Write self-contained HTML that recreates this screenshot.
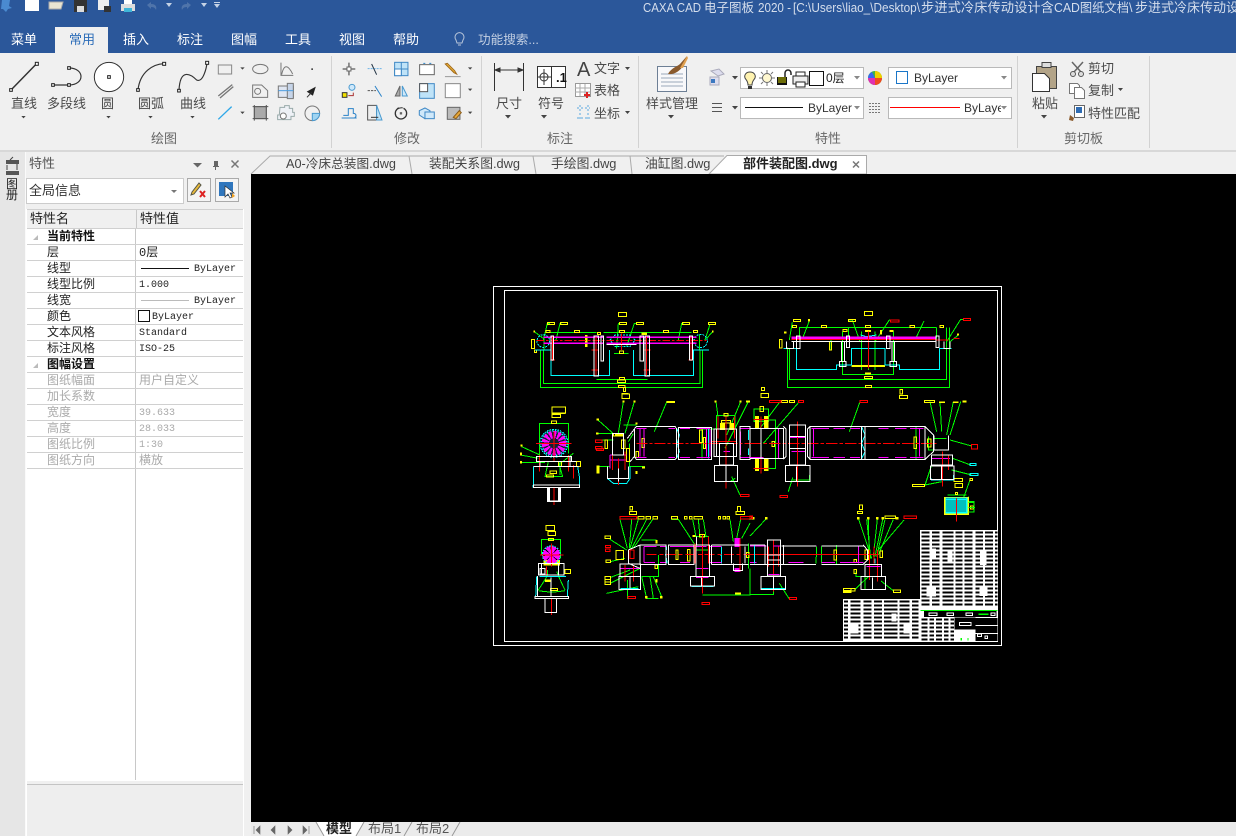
<!DOCTYPE html>
<html lang="zh"><head><meta charset="utf-8"><title>CAXA CAD 电子图板 2020</title>
<style>
html,body{margin:0;padding:0;width:1236px;height:836px;overflow:hidden;background:#f0f0f0}
svg{display:block}
text{font-family:"Liberation Sans","Noto Sans CJK SC",sans-serif;font-size:13px;fill:#444;white-space:pre}
.tab{fill:#fff}
.lb{fill:#4a4a4a}
.gp{fill:#666}
.t{fill:#d5deec;font-size:12.5px}
.s{font-family:"Liberation Mono","WenQuanYi Zen Hei","Noto Sans CJK SC",monospace;font-size:12px;fill:#222}
.d{fill:#aaa}
.b{font-weight:bold;fill:#111}
.m{font-family:"Liberation Mono",monospace;font-size:10px}
.ar{fill:#444;stroke:none}
</style></head><body>
<svg width="1236" height="836" viewBox="0 0 1236 836" xmlns="http://www.w3.org/2000/svg">
<defs><clipPath id="clipT"><rect x="0" y="0" width="1236" height="27"/></clipPath>
<clipPath id="c4"><rect x="888" y="97" width="113" height="21"/></clipPath></defs>
<!-- backgrounds -->
<rect width="1236" height="836" fill="#f0f0f0"/>
<rect width="1236" height="53" fill="#2b579a"/>
<rect x="55" y="27" width="53" height="27" fill="#f0f0f0"/>
<rect y="150" width="1236" height="2" fill="#d8d8d8"/>
<!-- title -->
<text x="643" y="12" class="t" textLength="58" lengthAdjust="spacingAndGlyphs">CAXA CAD</text>
<text x="704" y="12" class="t">电子图板</text>
<text x="758" y="12" class="t" textLength="33" lengthAdjust="spacingAndGlyphs">2020 -</text>
<text x="793" y="12" class="t" textLength="127" lengthAdjust="spacingAndGlyphs">[C:\Users\liao_\Desktop\</text>
<text x="921" y="12" class="t" style="font-size:13.300px">步进式冷床传动设计含</text>
<text x="1054" y="12" class="t" textLength="75" lengthAdjust="spacingAndGlyphs">CAD图纸文档</text>
<text x="1129" y="12" class="t">\</text>
<text x="1135" y="12" class="t" style="font-size:13px">步进式冷床传动设</text>
<!-- quick access -->
<g clip-path="url(#clipT)">
<path d="M2 0h8l-1 6 3 2-4 1-2 3-3-3H1z" fill="#4a8ad0"/>
<path d="M25 0h14v11H25z" fill="#fff"/>
<path d="M49 2h14l-2 7H49z" fill="#e8e4d2" stroke="#aaa"/>
<path d="M74 0h13v12H74z" fill="#333"/><rect x="77" y="6" width="7" height="6" fill="#ddd"/>
<path d="M98 0h11v10H98z" fill="#eee"/><rect x="104" y="6" width="7" height="6" fill="#333"/>
<path d="M121 4h14v7h-14z" fill="#ddd"/><rect x="124" y="0" width="8" height="4" fill="#fff"/><rect x="124" y="8" width="8" height="4" fill="#3fb6d8"/>
<path d="M147 5l4-3v2c5 0 6 3 5 6-1-2-2-3-5-3v2z" fill="#4f74aa"/>
<path d="M166 3h6l-3 4z" fill="#c5d2e5"/>
<path d="M191 5l-4-3v2c-5 0-6 3-5 6 1-2 2-3 5-3v2z" fill="#4f74aa"/>
<path d="M201 3h6l-3 4z" fill="#c5d2e5"/>
<path d="M214 2h6v1h-6zM214 4h6l-3 4z" fill="#c5d2e5"/>
</g>
<!-- tabs -->
<text x="11" y="44" class="tab">菜单</text>
<text x="69" y="44" style="fill:#2b6cb8">常用</text>
<text x="123" y="44" class="tab">插入</text>
<text x="177" y="44" class="tab">标注</text>
<text x="231" y="44" class="tab">图幅</text>
<text x="285" y="44" class="tab">工具</text>
<text x="339" y="44" class="tab">视图</text>
<text x="393" y="44" class="tab">帮助</text>
<path d="M456 40a4.5 4.5 0 1 1 7 0l-1 3h-5z" fill="none" stroke="#b8c6da"/><path d="M458 45h3" stroke="#b8c6da"/>
<text x="478" y="44" style="fill:#c3cfe2;font-size:12.6px">功能搜索...</text>
<!-- separators -->
<path d="M331.500 56V148M481.500 56V148M638.500 56V148M1017.500 56V148M1149.500 56V148" stroke="#d2d2d2"/>
<!-- draw group -->
<g transform="scale(.3333)" fill="none" stroke="#333" stroke-width="3.500">
<path d="M33 270L110 191" stroke-width="4.500"/>
<path d="M160 255H207M207 204C255 204 255 255 207 255"/>
<circle cx="327" cy="231" r="44" fill="#fff" stroke-width="3"/>
<path d="M414 270C420 215 460 192 492 191"/>
<path d="M537 272C540 200 575 225 590 240C610 250 620 200 621 188"/>
<g fill="#fff" stroke="#222" stroke-width="3">
<rect x="29" y="266" width="8" height="8"/><rect x="106" y="187" width="9" height="9"/>
<rect x="155" y="251" width="8" height="8"/><rect x="203" y="251" width="8" height="8"/><rect x="203" y="200" width="8" height="8"/>
<rect x="323" y="227" width="8" height="8"/>
<rect x="410" y="266" width="8" height="8"/><rect x="488" y="187" width="9" height="9"/>
<rect x="533" y="268" width="8" height="8"/><rect x="617" y="184" width="9" height="9"/>
</g>
<!-- small draw icons -->
<g stroke="#777" stroke-width="3">
<path d="M655 195H695V222H655Z" stroke="#888"/>
<ellipse cx="781" cy="207" rx="23" ry="14"/>
<path d="M843 188V226H880M845 224C852 190 865 195 878 222"/>
<path d="M655 288L697 254M660 294L700 260" stroke-width="4"/>
<path d="M758 255H785L803 272V292H758Z"/><circle cx="773" cy="274" r="9"/>
<path d="M835 258H880V292H835Z" fill="#dfe6f2"/><path d="M862 250H880V296H862Z" fill="#c6d4e8"/><path d="M835 272H880" stroke="#4c9de0"/>
<path d="M655 358L695 320" stroke="#2ea7e8" stroke-width="4"/>
<rect x="763" y="320" width="36" height="36" fill="#aaa"/><path d="M758 320H805M758 356H805M763 315V362M799 315V362" stroke="#555"/>
<path d="M840 322h14v-5h14v8h10v12h5v12h-10v10h-40v-14h5z" fill="#eef1f6" stroke="#9aa"/><circle cx="850" cy="348" r="9" fill="#fff"/>
<circle cx="937" cy="340" r="22"/><path d="M937 340h22a22 22 0 0 1-22 22z" fill="#9fd4f2" stroke="#4a9ad0"/>
<path d="M923 275L945 263L938 285Z" fill="#222" stroke="#222"/><path d="M921 292L936 276" stroke="#333"/>
</g>
<rect x="934" y="205" width="5" height="5" fill="#444" stroke="none"/>
<!-- modify icons -->
<g stroke="#666" stroke-width="3">
<path d="M1028 207H1040M1054 207H1066M1047 188V200M1047 214V226" stroke="#333"/><rect x="1041" y="201" width="12" height="12" fill="#fff"/>
<path d="M1103 206H1148" stroke="#6bb3e6" stroke-dasharray="6 3"/><path d="M1115 192L1130 224" stroke="#234"/>
<rect x="1184" y="187" width="40" height="40" fill="#bfe3f8" stroke="#3f88c5"/><path d="M1204 187V227M1184 207H1224" stroke="#3f88c5"/><rect x="1184" y="207" width="20" height="20" fill="#fff" stroke="#3f88c5"/>
<rect x="1259" y="194" width="44" height="30" fill="#fff" stroke="#666"/><path d="M1270 190h6M1288 190h6" stroke="#2a82c8"/>
<path d="M1336 192L1362 218L1370 222L1364 212L1342 190Z" fill="#f0b93a" stroke="#a26a1c"/><path d="M1335 230H1382" stroke="#999"/>
<rect x="1027" y="278" width="14" height="14" fill="#f3e100" stroke="#333"/><circle cx="1056" cy="262" r="9" fill="#cfe8fa" stroke="#4a9ad0"/><path d="M1045 287H1060V278" stroke="#a33"/>
<path d="M1103 272H1128" stroke="#555" stroke-dasharray="7 3"/><path d="M1125 258L1145 290" stroke="#2a82c8"/>
<path d="M1186 288L1200 258V288Z" fill="#aaa"/><path d="M1207 258L1222 288H1207Z" fill="#cfe8fa" stroke="#4a9ad0"/>
<rect x="1259" y="251" width="44" height="44" fill="#bfe3f8" stroke="#3f88c5"/><rect x="1259" y="251" width="24" height="24" fill="#fff" stroke="#555"/>
<rect x="1336" y="251" width="45" height="42" fill="#fff" stroke="#888"/>
<path d="M1025 354H1070M1030 346H1045V326H1060V340C1070 340 1070 350 1064 354" stroke="#2a82c8"/>
<path d="M1103 316H1130V360H1103Z" fill="#eee" stroke="#555"/><path d="M1130 316L1146 360H1130Z" fill="#bfe3f8" stroke="#4a9ad0"/><path d="M1113 352H1135" stroke="#333"/>
<circle cx="1203" cy="340" r="17" stroke="#333" stroke-width="4"/><rect x="1201" y="338" width="4" height="4" fill="#333"/><rect x="1197" y="318" width="14" height="8" fill="#f0f0f0" stroke="none"/><path d="M1192 325L1208 323" stroke="#333"/>
<path d="M1258 332L1275 324L1290 332V352L1275 356L1258 345Z" fill="#cfe8fa" stroke="#3f88c5"/><rect x="1275" y="336" width="28" height="20" fill="#cfe8fa" stroke="#3f88c5"/>
<rect x="1342" y="322" width="38" height="36" fill="#bbb" stroke="#666"/><path d="M1360 352L1378 332L1384 338L1368 356Z" fill="#e8a93a" stroke="#8a5b1a"/>
</g>
<g class="ar" fill="#444" stroke="none">
<path d="M64 348h13l-6.500 7zM319 348h13l-6.500 7zM445 348h13l-6.500 7zM571 348h13l-6.500 7zM721 202h13l-6.500 7zM721 335h13l-6.500 7zM1404 202h13l-6.500 7zM1404 266h13l-6.500 7zM1404 335h13l-6.500 7z"/>
</g>
</g>
<g class="lb">
<text x="11" y="108" class="lb">直线</text><text x="47" y="108" class="lb">多段线</text><text x="101" y="108" class="lb">圆</text><text x="138" y="108" class="lb">圆弧</text><text x="180" y="108" class="lb">曲线</text>
<text x="151" y="143" class="gp">绘图</text><text x="394" y="143" class="gp">修改</text>
<text x="496" y="108" class="lb">尺寸</text><text x="538" y="108" class="lb">符号</text>
<text x="594" y="73" class="lb">文字</text><text x="594" y="95" class="lb">表格</text><text x="594" y="118" class="lb">坐标</text>
<text x="547" y="143" class="gp">标注</text>
<text x="646" y="108" class="lb">样式管理</text><text x="815" y="143" class="gp">特性</text>
<text x="1032" y="108" class="lb">粘贴</text><text x="1088" y="73" class="lb">剪切</text><text x="1088" y="95" class="lb">复制</text><text x="1088" y="118" class="lb">特性匹配</text>
<text x="1064" y="143" class="gp">剪切板</text>
</g>
<!-- annotation icons -->
<g fill="none" stroke="#333">
<path d="M494.500 63V91M523.500 63V91M495 70H523"/><path d="M495 70l5-2v4zM523 70l-5-2v4z" fill="#333"/>
<rect x="537.500" y="66.500" width="28" height="21" fill="#fff"/><path d="M551.500 66V88"/><circle cx="544" cy="77" r="4"/><path d="M538 77H551M544 69V85"/>
<rect x="575.500" y="83.500" width="15" height="13" fill="#fff" stroke="#999"/><path d="M575 88H590M575 92H590M580 84V96M585 84V96" stroke="#aaa"/><path d="M584 95h6M587 92v6" stroke="#d22" stroke-width="2"/>
<path d="M577 108H590M577 118H590M580 105V121M588 105V121" stroke="#5aa7e0" stroke-dasharray="2 2"/>
</g>
<text x="556" y="82" style="font-size:13px;font-weight:bold;fill:#111">.1</text>
<text x="577" y="76" style="font-size:20px;fill:#444">A</text>
<g class="ar"><path d="M505 115h6l-3 3.500zM541 115h6l-3 3.500zM625 67h5l-2.500 3zM625 111h5l-2.500 3zM668 115h6l-3 3.500zM732 76h6l-3 3.500zM732 106h6l-3 3.500zM1041 115h6l-3 3.500zM1118 88h5l-2.500 3z"/></g>
<!-- style mgr -->
<rect x="657.500" y="66.500" width="29" height="25" fill="#f8f8fa" stroke="#6d7f95"/>
<path d="M661 74h22M661 78h22M661 82h22M661 86h22" stroke="#9aa9ba"/>
<path d="M668 74c3-6 10-8 12-10l7-8-4 10c-3 5-9 9-15 8z" fill="#8a5a2c"/>
<path d="M680 68l7-12 1 2-5 10z" fill="#e0a050"/>
<!-- prop icons -->
<path d="M711 71l8-2 5 5-6 2zM710 77h9v8h-9z" fill="#dde" stroke="#aab"/><rect x="711" y="79" width="4" height="4" fill="#3b78c0"/>
<path d="M712 103.500h10M712 107.500h10M712 111.500h10" stroke="#555"/>
<g fill="#fff" stroke="#b9b9b9">
<rect x="740.500" y="67.500" width="123" height="21"/><rect x="888.500" y="67.500" width="123" height="21"/>
<rect x="740.500" y="97.500" width="123" height="21"/><rect x="888.500" y="97.500" width="123" height="21"/>
</g>
<path d="M750 72c-4 0-6 3-5 6 1 2 3 3 3 7h4c0-4 2-5 3-7 1-3-1-6-5-6z" fill="#fff3b0" stroke="#444"/><path d="M748 86h4v3h-4z" fill="#333"/>
<circle cx="767" cy="78" r="4.500" fill="#fff8d0" stroke="#666"/><path d="M767 70v3M767 83v3M759 78h3M772 78h3M761 72l2 2M771 82l2 2M773 72l-2 2M763 82l-2 2" stroke="#777"/>
<rect x="777" y="77" width="10" height="8" fill="#111"/><path d="M778 78h8M778 80h8M778 82h8" stroke="#cc0"/><path d="M785 77v-4a3 3 0 0 1 6 0v2" fill="none" stroke="#222" stroke-width="1.500"/>
<path d="M793 76h15v8h-15z" fill="#eee" stroke="#222"/><rect x="796" y="72" width="9" height="4" fill="#fff" stroke="#222"/><rect x="796" y="82" width="9" height="5" fill="#fff" stroke="#222"/>
<rect x="809.500" y="71.500" width="14" height="14" fill="#fff" stroke="#111"/>
<text x="826" y="82" style="font-size:12px;fill:#222">0层</text>
<path d="M854 76h6l-3 3.500zM1001 76h6l-3 3.500zM854 106h6l-3 3.500zM1001 106h6l-3 3.500z" fill="#888"/>
<circle cx="875" cy="78" r="7" fill="#3fb24a"/><path d="M875 78V71A7 7 0 0 1 882 78Z" fill="#f0d000"/><path d="M875 78H882A7 7 0 0 1 875 85Z" fill="#f04a20"/><path d="M875 78V85A7 7 0 0 1 868 78Z" fill="#e030b0"/><path d="M875 78H868A7 7 0 0 1 872 72Z" fill="#3a66f0"/>
<rect x="896.500" y="71.500" width="11" height="12" fill="#fff" stroke="#1a76c8"/>
<text x="914" y="82" style="font-size:12px;fill:#333">ByLayer</text>
<path d="M745 107.500H803" stroke="#111"/>
<text x="808" y="112" style="font-size:12px;fill:#333">ByLayer</text>
<path d="M869 103.500h12M869 106.500h12M869 109.500h12M869 112.500h12" stroke="#777" stroke-dasharray="2 1"/>
<rect x="890" y="107" width="70" height="1" style="fill:#ff0000"/>
<g clip-path="url(#c4)"><text x="964" y="112" style="font-size:12px;fill:#333">ByLayer</text></g>
<!-- clipboard icons -->
<rect x="1036.500" y="66.500" width="20" height="22" fill="#b3a488" stroke="#444"/><rect x="1042" y="62.500" width="9" height="5" fill="#ddd" stroke="#444"/>
<path d="M1032.500 73.500h12l5 5V91.500h-17z" fill="#fff" stroke="#333"/>
<path d="M1072 62l9 10M1083 62l-9 10" stroke="#666" stroke-width="1.500"/><circle cx="1073" cy="74" r="2.500" fill="#ddd" stroke="#555"/><circle cx="1081" cy="74" r="2.500" fill="#ddd" stroke="#555"/>
<path d="M1069.500 83.500h8l2 2v8h-10z" fill="#fff" stroke="#777"/><path d="M1074.500 87.500h7l3 3v8h-10z" fill="#fff" stroke="#777"/>
<rect x="1074.500" y="105.500" width="10" height="12" fill="#fff" stroke="#666"/><rect x="1076" y="107" width="6" height="6" fill="#2f6cb3"/><path d="M1070 115l4 3-1 3-4-1z" fill="#8a5a2c"/>
<!-- left strip -->
<rect x="0" y="152" width="25" height="684" fill="#e6e6e6"/>
<rect x="25" y="152" width="1" height="684" fill="#fafafa"/>
<path d="M6 160h13v4H6zM6 171h13v4H6z" fill="#555"/><path d="M7 170v-5M17 170v-6M10 160l3-3" stroke="#444"/>
<text x="6" y="188" class="s" style="font-size:12px">图</text><text x="6" y="199" class="s" style="font-size:12px">册</text>
<!-- prop panel -->
<text x="29" y="168" style="font-size:13px;fill:#555">特性</text>
<path d="M193 163h9l-4.500 4.500z" fill="#666"/>
<path d="M214 161h4v5h1v1h-3v3h-1v-3h-2v-1h1z" fill="#666"/>
<path d="M231.500 160.500l7 7M238.500 160.500l-7 7" stroke="#777" stroke-width="1.500"/>
<rect x="26.500" y="178.500" width="157" height="25" fill="#fff" stroke="#ccc"/>
<text x="29" y="195" style="font-size:13px;fill:#333">全局信息</text>
<path d="M171 190h6l-3 3z" fill="#777"/>
<rect x="187.500" y="178.500" width="23" height="23" fill="#f4f4f4" stroke="#aaa"/>
<path d="M192 192l7-9 2 2-7 9-3 1z" fill="#e8b93a" stroke="#554"/><path d="M200 191l5 6M205 191l-5 6" stroke="#d22" stroke-width="2"/>
<rect x="215.500" y="178.500" width="23" height="23" fill="#f4f4f4" stroke="#aaa"/>
<rect x="219" y="182" width="14" height="14" fill="#2f76bd"/><path d="M225 186v11l3-3 2 4 2-1-2-4h4z" fill="#fff" stroke="#333" stroke-width=".7"/><path d="M232 193l3 3-3 2" fill="#f2a01f"/>
<rect x="26" y="209" width="218" height="572" fill="#fff"/>
<rect x="26" y="209" width="218" height="19" fill="#f0f0f0"/>
<path d="M26.500 209V836M243.500 209V836" stroke="#fff"/>
<path d="M136.500 209V228M135.500 228V780" stroke="#c8c8c8"/>
<path d="M27 209.500H243M27 228.500H243M27 244.500H243M27 260.500H243M27 276.500H243M27 292.500H243M27 308.500H243M27 324.500H243M27 340.500H243M27 356.500H243M27 372.500H243M27 388.500H243M27 404.500H243M27 420.500H243M27 436.500H243M27 452.500H243M27 468.500H243" stroke="#d0d0d0"/>
<path d="M27 784.500H243" stroke="#c4c4c4"/>
<rect x="27" y="785" width="216" height="51" fill="#eee"/>
<path d="M33 240l5-5v5zM33 368l5-5v5z" fill="#bbb"/>
<text x="30" y="223" class="s" style="font-size:13px">特性名</text><text x="140" y="223" class="s" style="font-size:13px">特性值</text>
<text x="47" y="240" class="s b">当前特性</text>
<text x="47" y="256" class="s">层</text><text x="47" y="272" class="s">线型</text><text x="47" y="288" class="s">线型比例</text><text x="47" y="304" class="s">线宽</text><text x="47" y="320" class="s">颜色</text><text x="47" y="336" class="s">文本风格</text><text x="47" y="352" class="s">标注风格</text>
<text x="47" y="368" class="s b">图幅设置</text>
<text x="47" y="384" class="s d">图纸幅面</text><text x="47" y="400" class="s d">加长系数</text><text x="47" y="416" class="s d">宽度</text><text x="47" y="432" class="s d">高度</text><text x="47" y="448" class="s d">图纸比例</text><text x="47" y="464" class="s d">图纸方向</text>
<text x="139" y="256" class="s">0层</text>
<path d="M141 268.500H189" stroke="#111"/><text x="194" y="271" class="s m">ByLayer</text>
<text x="139" y="287" class="s m">1.000</text>
<path d="M141 300.500H189" stroke="#bbb"/><text x="194" y="303" class="s m">ByLayer</text>
<rect x="138.500" y="310.500" width="11" height="11" fill="#fff" stroke="#111"/><text x="152" y="319" class="s m">ByLayer</text>
<text x="139" y="335" class="s m">Standard</text>
<text x="139" y="351" class="s m">ISO-25</text>
<text x="139" y="384" class="s d">用户自定义</text>
<text x="139" y="415" class="s m d">39.633</text><text x="139" y="431" class="s m d">28.033</text><text x="139" y="447" class="s m d">1:30</text>
<text x="139" y="464" class="s d">横放</text>
<!-- doc tabs -->
<rect x="251" y="155" width="985" height="19" fill="#f0f0f0"/>
<path d="M251 174L270 156H409L412 174M409 156H533L536 174M533 156H630L632 174M630 156H724" fill="none" stroke="#aaa"/>
<path d="M709 174L727 155.500H866.500V174Z" fill="#fff" stroke="#aaa"/>
<text x="286" y="168" style="font-size:12.700px">A0-冷床总装图.dwg</text>
<text x="429" y="168" style="font-size:12.800px">装配关系图.dwg</text>
<text x="551" y="168" style="font-size:12.800px">手绘图.dwg</text>
<text x="645" y="168" style="font-size:12.800px">油缸图.dwg</text>
<text x="743" y="168" style="font-size:13px;font-weight:bold;fill:#222">部件装配图.dwg</text>
<path d="M853 161.500l6 6M859 161.500l-6 6" stroke="#777" stroke-width="1.500"/>
<!-- canvas -->
<rect x="251" y="174" width="985" height="648" fill="#000"/>
<!-- bottom tabs -->
<rect x="251" y="822" width="985" height="14" fill="#ebebeb"/>
<path d="M254 826v8M260 826l-4 4 4 4zM275 826l-4 4 4 4zM288 826l4 4-4 4zM303 826l4 4-4 4zM309 826v8" fill="#666" stroke="#666" stroke-width=".6"/>
<path d="M316 822L324 836H356L364 822Z" fill="#fff"/>
<path d="M316 822L324 836M364 822L356 836M412 822L404 836M460 822L452 836" stroke="#999" fill="none"/>
<text x="326" y="833" style="font-size:13px;font-weight:bold;fill:#222">模型</text>
<text x="368" y="833" style="font-size:13px;fill:#555">布局1</text>
<text x="416" y="833" style="font-size:13px;fill:#555">布局2</text>
<!-- DRAWING -->
<g fill="none" stroke-width="1" shape-rendering="crispEdges">
<rect x="493.500" y="286.500" width="508" height="359" stroke="#fff"/>
<rect x="504.500" y="290.500" width="493" height="351" stroke="#fff"/>
</g>
<g transform="translate(490 285) scale(.33333)" fill="none" stroke-width="3" shape-rendering="crispEdges">
<g stroke="#0f0">
<path d="M152 195V307H638V195M160 195V296H630V195M165 143H320M340 143H605M320 284H472M133 140L160 160M180 115H172L160 165M215 115H210L198 165M390 115H385L380 190M440 115H433L410 185M580 115H575L565 165M660 118L645 165M668 140L650 160M372 205H415M162 148V195M628 148V195"/>
<path d="M323 404L370 446M400 350L385 445M433 350L405 445M535 351H530L493 440M678 350L684 395M752 350L710 450M775 350L705 490M400 420H440M322 445H370M322 465H370M322 545H360M430 445L415 470M418 475V545H465"/>
<path d="M148 510V415H236V505M95 485L150 510M92 510L145 520M92 533H165M175 530L165 575H218L205 530M210 530V570M250 505L205 540M255 530H205"/>
<path d="M680 392H735V432H680ZM680 432V400M636 432H670M636 432V520M725 575L750 630M678 590H720L735 580"/>
</g>
<g stroke="#ff0">
<path d="M172 112h22v7h-22zM211 112h22v7h-22zM388 112h22v7h-22zM439 112h22v7h-22zM577 112h22v7h-22zM655 112h22v7h-22zM385 82h25v13h-25zM168 136h12v6h-12zM253 136h16v6h-16zM388 136h16v6h-16zM520 136h16v6h-16zM610 136h12v6h-12zM322 143h10v6h-10zM125 163h8v28h-8zM133 195h6v8h-6zM388 198h12v7h-12zM382 285h25v8h-25zM388 277h16v7h-16zM385 301h20v7h-20zM400 307h7v13h-7zM396 327h23v14h-23zM395 325h20"/>
<path d="M186 366h41v18h-41zM186 388h26v10h-26zM184 408h16v7h-16zM180 558h20v8h-20zM170 570h20v6h-20zM260 530h12v14h-12zM205 530h10v14h-10zM185 386h42"/>
<path d="M456 460h8v28h-8zM438 500h8v18h-8zM628 435h10v38h-10zM640 458h6v32h-6zM694 406h28v8h-28zM702 385h12v8h-12zM370 445h30v8h-30zM395 465h10v25h-10zM410 490h8v40h-8zM345 465h8v25h-8z"/>
<path d="M720 415h12v18h-12zM692 415h12v18h-12z" fill="#ff0"/>
</g>
<g fill="#ff0" stroke="none">
<rect x="530" y="348" width="25" height="6"/><rect x="130" y="136" width="5" height="7"/><rect x="666" y="136" width="5" height="7"/><rect x="455" y="143" width="16" height="7"/><rect x="285" y="150" width="8" height="36"/>
<rect x="320" y="400" width="7" height="7"/><rect x="397" y="346" width="7" height="7"/><rect x="430" y="346" width="7" height="7"/><rect x="673" y="346" width="7" height="7"/><rect x="748" y="346" width="7" height="7"/><rect x="768" y="346" width="12" height="7"/>
<rect x="318" y="442" width="8" height="6"/><rect x="320" y="542" width="8" height="24"/><rect x="92" y="478" width="6" height="6"/><rect x="90" y="502" width="6" height="9"/><rect x="90" y="528" width="6" height="7"/><rect x="436" y="558" width="6" height="9"/><rect x="456" y="544" width="9" height="7"/><rect x="436" y="412" width="7" height="6"/><rect x="375" y="445" width="25" height="8"/>
</g>
<g stroke="#0ff">
<path d="M135 195H183V271H358V195M430 195V271H611V195H657"/>
<circle cx="160" cy="168" r="19" stroke-dasharray="6 3"/><circle cx="632" cy="168" r="20" stroke-dasharray="6 3"/><path d="M360 165L375 150H418L435 165L420 185H375Z" stroke-dasharray="6 3"/>
<path d="M130 545V600L128 607M263 545L268 575V607M352 545V580L370 595H410L420 580V545"/>
<path d="M560 430L568 450L562 475L568 500L560 520M655 430V520M775 435V465M775 490V510"/>
</g>
<circle cx="192" cy="475" r="42" fill="#123" stroke="#0ff" stroke-dasharray="5 3"/>
<circle cx="192" cy="475" r="37" stroke="#0ff" stroke-width="6" stroke-dasharray="3 5"/>
<circle cx="192" cy="475" r="26" stroke="#f0f" stroke-width="22" stroke-dasharray="8 4"/>
<g stroke="#f0f">
<path d="M160 157H340M160 175H340M430 157H620M430 175H620M350 157H440M350 175H440" stroke-width="4"/>
<path d="M440 430H470M535 430H555M570 430H600M620 430H660M440 518H470M535 518H555M570 518H600M620 518H660M752 430H780M752 518H780"/>
<path d="M450 432V515M462 432V515M650 432V515M660 432V515M752 440V510M360 510H410M360 525H410M360 510V550M720 500H700"/>
</g>
<g stroke="#f00">
<path d="M140 167H650" stroke-dasharray="22 6 8 6"/>
<path d="M440 475H780" stroke-dasharray="32 6 10 6"/>
<path d="M138 475H245M192 440V530M192 608V660M148 510V560M236 510V560M250 540V580"/>
<path d="M368 445V555M385 520V600M405 500V555M708 395V610M665 470H740M684 395V460M734 395V460"/>
<path d="M316 465h20v7h-20zM316 484h20v8h-20zM320 490h20v7h-20zM752 628h25v7h-25zM180 225h15M595 225h15M305 195h22M460 195h22M305 255h22M460 255h22"/>
<path d="M395 145V195M187 153V228M318 153V275M470 153V272M603 153V228"/>
</g>
<g stroke="#fff">
<path d="M183 153h7v72h-7zM312 153h13v120h-13zM333 153h8v75h-8zM450 153h10v75h-10zM465 153h13v120h-13zM598 153h10v72h-10zM350 178H440"/>
<path d="M440 424H555L560 432V518L555 524H440L433 515V432ZM433 432L412 460M433 515L420 530M565 428H665V524H565ZM672 432H740V515H672ZM680 432V515M740 432V515M750 424H780V524H750ZM688 475H730V540H688ZM673 541H743V590H673ZM708 541V590M686 590H730"/>
<path d="M140 515H245V530H140ZM163 530H260M130 545H265M130 600H268V607H130ZM175 608V650H210V608M178 648H208M150 530V545M240 515V545"/>
<path d="M352 545V580H415V545M385 550V590M368 445H400V510H368Z"/>
<path d="M172 608h6v42h-6zM205 608h6v42h-6z" fill="#fff"/>
</g>
</g>
<g transform="translate(750 285) scale(.33333)" fill="none" stroke-width="3" shape-rendering="crispEdges">
<g stroke="#0f0">
<path d="M148 160V127H295V160M560 127H295M560 127V160M127 112L118 165M177 110L157 162M297 105H307L330 170M425 105H418L375 170M522 108L495 165M640 103H632L590 170M118 190V284H590V127M112 188V307H598V127M278 140V268H430V140M335 140V255M375 140V255M355 140V255M243 155V195M625 150L600 170"/>
<path d="M12 372H55V410H12ZM12 405H76V550H55M76 405V500M148 350L40 475M90 350L30 430M498 425V525M540 350L560 440M570 350L575 440M610 350L590 450M632 350L600 450M600 465L665 483M608 520L662 540M605 555L665 570M575 590L525 600M545 540L525 600M640 640L660 585M115 620L128 578M125 585H178V570M330 350L298 440"/>
<path d="M592 630H650M650 650H674M655 635V660M535 455V495H552M554 460H590"/>
</g>
<g stroke="#ff0">
<path d="M130 103h22v7h-22zM295 103h22v7h-22zM343 79h25v13h-25zM214 121h16v7h-16zM346 121h16v7h-16zM480 121h14v7h-14zM570 121h11v7h-11zM127 121h12v7h-12zM279 133h12v7h-12zM88 163h8v26h-8zM238 170h6v25h-6zM343 274h25v7h-25zM346 301h18v6h-18zM450 313h8v14h-8zM448 331h25v10h-25zM33 325h23v13h-23zM34 307h10v10h-10zM118 346h16v6h-16zM524 346h30v6h-30zM492 456h7v35h-7zM533 462h10v24h-10zM612 580h25v10h-25zM615 595h23v13h-23zM488 598h36v7h-36zM617 622h6v6h-6zM660 580h8v6h-8zM66 470h8v15h-8zM30 365h10v15h-10zM95 346h18v6h-18z"/>
<path d="M16 395h10v35h-10zM44 395h10v35h-10zM16 520h10v36h-10zM44 520h10v36h-10z" fill="#ff0"/>
</g>
<g fill="#ff0" stroke="none">
<rect x="174" y="102" width="6" height="8"/><rect x="345" y="135" width="18" height="6"/><rect x="390" y="135" width="6" height="14"/><rect x="418" y="135" width="12" height="6"/><rect x="305" y="240" width="100" height="6"/><rect x="345" y="262" width="18" height="6"/><rect x="621" y="145" width="6" height="6"/><rect x="102" y="139" width="8" height="7"/><rect x="567" y="349" width="18" height="5"/><rect x="609" y="349" width="16" height="5"/><rect x="638" y="346" width="12" height="7"/>
<rect x="582" y="636" width="75" height="24"/>
</g>
<rect x="586" y="638" width="66" height="22" fill="#0ff" stroke="none"/>
<path d="M590 640h60M590 646h60M590 652h60M590 658h60" stroke="#000" stroke-dasharray="3 3" stroke-width="2"/>
<g stroke="#0ff">
<path d="M100 190H139V253H260V240H305V190H405V240H448V253H568V190H605"/>
<path d="M335 425L345 450L335 475L345 500L335 520M332 150L350 155L380 150M540 575L545 585H610V570"/>
</g>
<rect x="125" y="155" width="435" height="7" fill="#f0f" stroke="none"/>
<g stroke="#f0f" stroke-width="3">
<path d="M185 430H237M250 430H285M300 430H330M385 430H415M435 430H470M480 430H520M185 518H237M250 518H285M300 518H330M385 518H415M435 518H470M480 518H520M120 458H165M120 490H165M125 500H165M0 430H40M0 518H40M85 430V520M190 432V515M508 432V515M545 520H600"/>
</g>
<g stroke="#f00">
<path d="M125 164H560" stroke-width="3"/><path d="M0 475H560" stroke-dasharray="35 6 10 6"/>
<path d="M422 105h25v6h-25zM640 100h22v6h-22zM330 346h22v6h-22zM145 346h16v6h-16zM58 346h35v6h-35zM664 478h18v14h-18zM90 631h22v7h-22z"/>
<path d="M142 410V605M33 395V565M355 140V250M578 500V605M596 510V555M10 550H55M10 403H55M610 160H628M620 640V660M595 165H560"/>
</g>
<g stroke="#fff">
<path d="M180 424H525V523H180ZM180 424L173 432V515L180 523M525 424L550 450V500L525 523M335 424V523M345 424V523M100 424L108 432V515L100 523M118 420H167V540H118ZM118 455H167M118 490H167M106 541H180V590H106ZM140 545V590M0 430H100V520H0M0 430M33 430V520"/>
<path d="M125 169H560M140 153h10v38h-10zM290 153h9v35h-9zM410 153h10v38h-10zM558 153h9v35h-9zM275 170h9v60h-9zM426 170h8v60h-8zM110 170V190H130V170M582 170V190H600V170M268 230h20v15h-20zM420 230h20v15h-20z"/>
<path d="M552 452V495H595V452M544 510H608V540H544ZM541 543H612V584H541ZM575 543V584"/>
</g>
<g stroke="#0ff"><path d="M660 535h18v7h-18zM660 565h24v7h-24z"/></g>
</g>
<g transform="translate(490 500) scale(.33333)" fill="none" stroke-width="3" shape-rendering="crispEdges">
<g stroke="#0f0">
<path d="M390 58L412 145M425 58L418 145M445 58L420 145M470 58L425 145M488 58L430 145M545 58H565L615 135M608 58L618 110M625 58L630 110M640 58L648 110M720 58L730 125M752 58L740 115M780 70L755 115"/>
<path d="M155 165V118H212V175M145 270C170 230 175 230 172 210M225 270C205 230 205 225 200 215M145 272Q185 280 225 272M360 118L410 150M360 185L405 175M362 232L420 210M360 250L450 205M350 280L445 260M455 230L470 295H505M480 230L490 295M490 230L515 290M412 240V295H430M505 165V230H455M455 120H500M610 110H655V150H615M638 285H780V205M775 130V205"/>
</g>
<g stroke="#ff0">
<path d="M168 76h26v15h-26zM174 94h22v13h-22zM175 115h16v6h-16zM225 208h16v12h-16zM345 108h16v8h-16zM348 180h14v8h-14zM345 230h16v8h-16zM345 238h16v8h-16zM345 246h16v8h-16zM420 20h8v10h-8zM418 34h22v10h-22zM444 50h18v7h-18zM468 50h14v7h-14zM489 50h14v7h-14zM545 50h18v7h-18zM583 50h8v7h-8zM598 50h8v7h-8zM612 50h25v7h-25zM685 50h7v7h-7zM699 50h8v7h-8zM711 50h8v7h-8zM742 20h10v14h-10zM738 34h26v10h-26zM378 152h22v26h-22zM592 148h8v35h-8zM558 150h6v28h-6zM628 103h16v8h-16zM770 158h7v15h-7zM495 195h8v10h-8zM181 265h22v6h-22z"/>
</g>
<g fill="#ff0" stroke="none"><rect x="735" y="277" width="18" height="6"/><rect x="165" y="238" width="18" height="8"/><rect x="465" y="288" width="8" height="8"/><rect x="510" y="288" width="8" height="8"/><rect x="497" y="120" width="6" height="10"/><rect x="497" y="237" width="6" height="10"/><rect x="608" y="105" width="8" height="6"/><rect x="160" y="180" width="50" height="16"/></g>
<g stroke="#0ff"><path d="M140 230L137 290M235 240L232 290M148 230H228M392 265H445M535 140V190M530 140L527 165L532 190M695 140V190M690 165H695M605 260H670"/><circle cx="184" cy="165" r="27" stroke-dasharray="5 3"/></g>
<circle cx="184" cy="165" r="14" stroke="#f0f" stroke-width="24" stroke-dasharray="9 2"/>
<g stroke="#f0f"><path d="M462 140H500M510 140H530M540 140H610M620 140H650M660 140H695M462 187H495M510 187H530M570 187H600M660 187H695M462 140V187M392 205H450M618 205H655M618 232H655"/><path d="M735 115h15v25h-15zM735 205h15v10h-15z" fill="#f0f"/></g>
<g stroke="#f00"><path d="M150 165H220M184 130V200M184 295V345M170 200V225M205 195V225" /><path d="M390 50h50v7h-50zM752 50h35v7h-35zM346 136h16v7h-16zM346 147h14v7h-14zM414 289h22v7h-22zM636 307h22v7h-22zM420 150h12v25h-12z"/><path d="M470 163H780" stroke-dasharray="30 8 12 8"/><path d="M405 195V245M430 195V245M637 105V280M615 130V190M655 110V190M750 115V215"/></g>
<g stroke="#fff"><path d="M145 190H222V225H145ZM150 205H165V222H150ZM142 228V290M135 290H235V296H135ZM165 296V338H200V296M165 338H200M183 232V288M155 190V225M205 190V225"/><path d="M450 135H528V193H450ZM450 135L415 150V190L450 205M535 135H612V193H535ZM612 135V193M618 135H658V230H618ZM664 135H695M664 193H695M664 135V193M695 135H775M695 193H775M725 140V190M765 140V190M390 192H452V230H390ZM387 230H452V268H387ZM420 230V265M601 230H674V258H601ZM635 232V258M730 190V212H758V190M620 110V135H655"/></g>
</g>
<g transform="translate(750 500) scale(.33333)" fill="none" stroke-width="3" shape-rendering="crispEdges">
<rect x="510" y="90" width="233" height="240" fill="#fff" stroke="none"/>
<rect x="279" y="297" width="232" height="127" fill="#fff" stroke="none"/>
<rect x="511" y="330" width="232" height="93" fill="#fff" stroke="none"/>
<g stroke="#000" stroke-width="6">
<path stroke-dasharray="24 8 22 10 32 6 22 5 24 10 22 6 24 6" d="M514 98H743M514 110H743M514 122H743M514 134H743M514 146H743M514 158H743M514 170H743M514 182H743M514 194H743M514 206H743M514 218H743M514 230H743M514 242H743M514 254H743M514 266H743M514 278H743M514 290H743M514 302H743M514 314H743"/>
<path stroke-dasharray="12 8 30 8 24 8 24 6 40 6 30 8 20 5" d="M282 305H511M282 317H511M282 329H511M282 341H511M282 353H511M282 365H511M282 377H511M282 389H511M282 401H511M282 413H511"/>
<path stroke-dasharray="18 6 14 6" d="M514 358H612M514 370H612M514 382H612M514 394H612M514 406H612M514 418H612"/>
</g>
<g fill="#fff" stroke="none">
<rect x="538" y="145" width="20" height="30"/><rect x="530" y="260" width="28" height="30"/><rect x="592" y="150" width="16" height="40"/><rect x="690" y="150" width="20" height="45"/><rect x="688" y="262" width="24" height="26"/><rect x="302" y="370" width="24" height="30"/><rect x="424" y="340" width="16" height="25"/><rect x="460" y="370" width="18" height="30"/>
</g>
<rect x="522" y="333" width="218" height="18" fill="#000" stroke="none"/>
<rect x="614" y="352" width="63" height="36" fill="#000" stroke="none"/>
<rect x="677" y="352" width="66" height="71" fill="#000" stroke="none"/>
<path d="M677 376H743M677 400H743M677 352H743" stroke="#fff"/>
<path d="M537 339h24v8h-24zM591 339h20v8h-20zM648 339h20v8h-20zM723 339h12v8h-12zM628 367h35v10h-35zM682 402h13v8h-13zM705 408h8v8h-8zM625 392h35M625 405h20" stroke="#fff"/>
<path d="M511 331H743" stroke="#0f0"/><path d="M685 343H715M634 414v8M654 414v8" stroke="#0f0" stroke-width="4"/>
<g stroke="#0f0">
<path d="M0 60L0 50M50 55L0 108M325 55L365 175M350 58L362 175M355 58L358 175M382 58L370 170M398 58L375 170M405 58L380 170M430 58L385 165M462 60L385 150M88 250L118 297M318 215V230H345M355 230L315 268M393 243L430 272M345 230V268H405M398 150V170M200 140L198 190M260 135V195M215 140V190M0 283H70V240"/>
</g>
<g stroke="#ff0">
<path d="M328 15h10v14h-10zM323 34h15v7h-15zM405 48h32v7h-32zM281 265h22v13h-22zM303 265h12v8h-12zM430 270h22v7h-22zM252 150h7v30h-7zM390 153h7v20h-7zM345 150h10v28h-10zM312 178h8v10h-8zM312 208h8v12h-8zM662 18h8v9h-8z"/>
</g>
<g fill="#ff0" stroke="none"><rect x="321" y="51" width="8" height="7"/><rect x="351" y="51" width="8" height="7"/><rect x="378" y="51" width="8" height="7"/><rect x="394" y="51" width="8" height="7"/><rect x="437" y="51" width="8" height="7"/><rect x="45" y="51" width="8" height="7"/><rect x="5" y="51" width="8" height="7"/><rect x="281" y="270" width="24" height="8"/><rect x="582" y="0" width="75" height="45"/></g>
<rect x="586" y="0" width="66" height="41" fill="#0ff" stroke="none"/>
<path d="M590 3h60M590 9h60M590 15h60M590 21h60M590 27h60M590 33h60" stroke="#000" stroke-dasharray="3 3" stroke-width="3"/>
<path d="M656 8H672V36H656M656 22H675" stroke="#0f0"/>
<g stroke="#f00"><path d="M619 0V65M70 120V275M55 140V200M85 140V200M0 163H385"/><path d="M462 48h38v7h-38zM118 292h22v7h-22zM0 48h8v7h-8zM358 150V240M382 150V245M372 140V190"/></g>
<g stroke="#f0f"><path d="M0 138H50M70 138H90M115 138H200M220 138H340M0 187H20M115 187H160M215 187H255M270 187H340M326 140V190M55 224H88M350 200H392"/></g>
<g stroke="#0ff"><path d="M13 135V190M33 265H105M375 175V190"/></g>
<g stroke="#fff"><path d="M0 135H45M100 135V193H0M52 120H92V228H52ZM52 165H92M52 180H92M95 138H198M95 193H198M214 138H340M214 193H340M340 135L352 150V180L340 193M345 193H395V230H345ZM333 229H407V268H333ZM367 232V268M33 229H107V268H33ZM70 229V268M45 135V193"/></g>
</g>
</svg>
</body></html>
